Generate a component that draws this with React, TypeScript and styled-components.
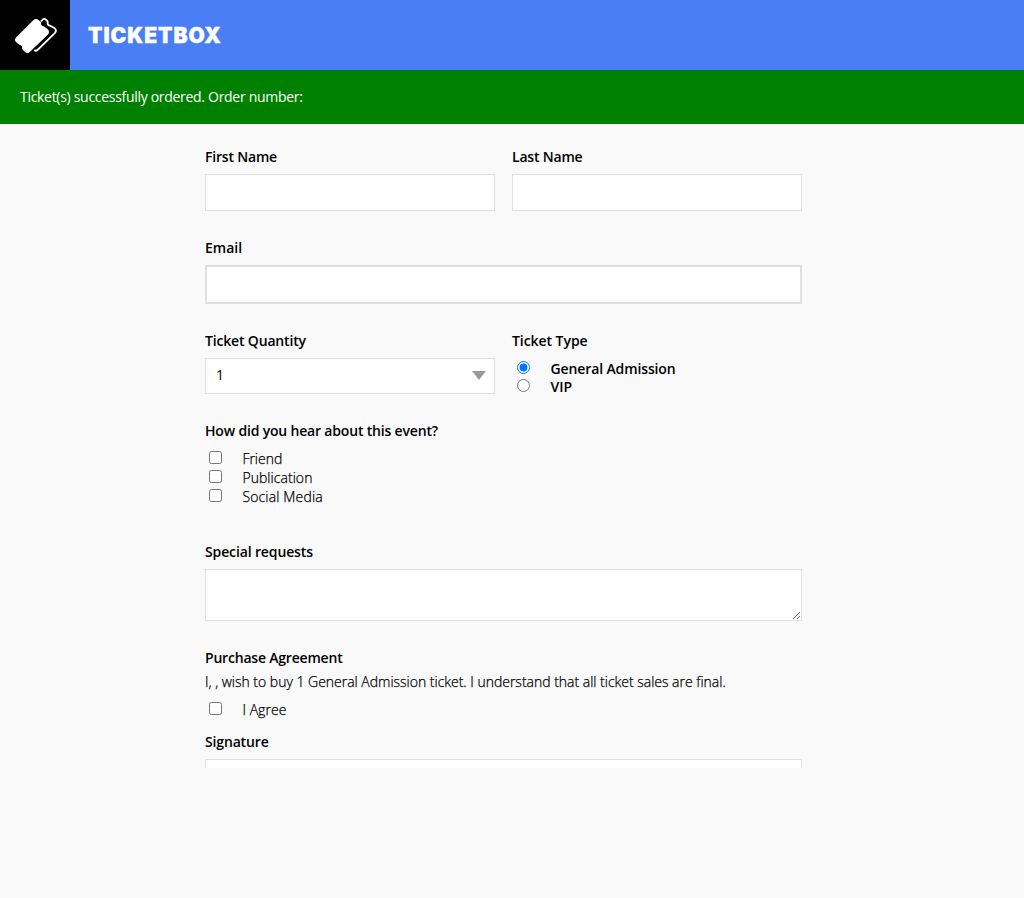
import React from 'react';
import styled, { createGlobalStyle } from 'styled-components';

const GlobalStyle = createGlobalStyle`
  *, *::before, *::after { box-sizing: border-box; }
  body {
    margin: 0;
    background: #f9f9f9;
    color: #000;
    font: 300 14px/19px 'Open Sans', 'Noto Sans', sans-serif;
  }
`;

const Header = styled.header`
  display: flex;
  align-items: center;
  height: 70px;
  background: #4a7ef4;
`;

const LogoTile = styled.div`
  width: 70px;
  height: 70px;
  background: #000;
`;

const Brand = styled.h1`
  margin: 2px 0 0 18px;
  color: #fff;
  font: 900 21px/30px Inter, sans-serif;
  letter-spacing: 1px;
  -webkit-text-stroke: 0.4px #fff;
`;

const Banner = styled.div`
  height: 54px;
  padding: 17px 20px;
  background: #008000;
  color: #fff;
  font-weight: 400;
  font-size: 14px;
  line-height: 20px;
`;

const Phrase = styled.span<{ $track?: number }>`
  letter-spacing: ${(p) => p.$track ?? 0}px;
  white-space: nowrap;
`;

const LightPhrase = styled(Phrase)`
  -webkit-text-stroke: 0.25px #000;
`;

const Form = styled.form`
  width: 597px;
  height: 644px;
  margin-left: 205px;
  padding-top: 23px;
  overflow: hidden;
`;

const Columns = styled.div`
  display: grid;
  grid-template-columns: 290px 290px;
  column-gap: 17px;
`;

const Field = styled.div<{ $gap?: number }>`
  display: flex;
  flex-direction: column;
  margin-bottom: ${(p) => p.$gap ?? 0}px;
`;

const Label = styled.label<{ $gap?: number }>`
  height: 20px;
  margin-bottom: ${(p) => p.$gap ?? 7}px;
  font-weight: 600;
  font-size: 14px;
  line-height: 20px;
`;

const Input = styled.input<{ $strong?: boolean }>`
  width: 100%;
  height: ${(p) => (p.$strong ? 39 : 37)}px;
  margin: 0;
  border: ${(p) => (p.$strong ? 2 : 1)}px solid #dfdfdf;
  border-radius: 0;
  background: #fff;
`;

const SelectBox = styled.div`
  display: flex;
  align-items: center;
  justify-content: space-between;
  height: 36px;
  padding: 0 8px 2px 10px;
  border: 1px solid #dfdfdf;
  background: #fff;
  font-weight: 400;
  font-size: 14px;
  line-height: 18px;
`;

const TextArea = styled.textarea`
  display: block;
  width: 100%;
  height: 52px;
  margin: 0;
  border: 1px solid #dfdfdf;
  border-radius: 0;
  background: #fff;
`;

const Option = styled.label<{ $radio?: boolean }>`
  display: flex;
  height: ${(p) => (p.$radio ? 18 : 19)}px;
  line-height: 18px;
  font-weight: ${(p) => (p.$radio ? 600 : 300)};

  input {
    width: 13px;
    height: 13px;
    margin: ${(p) => (p.$radio ? '1px 20.5px 0 5px' : '1px 20.4px 0 4px')};
  }
`;

const Statement = styled.p`
  height: 20px;
  margin: 0 0 9px;
  line-height: 20px;
`;

const TicketsIcon = () => (
  <svg width="70" height="70" viewBox="0 0 70 70" aria-hidden="true">
    <path
      d="M41 21.500 42.300 20Q44 18 46 19.700L47.800 21.800Q46.800 25 50.300 25.800L54.800 28.300Q57 30.500 55 32.800L37.500 50Q36 51.500 34.300 50"
      fill="none"
      stroke="#fff"
      strokeWidth="1.800"
      strokeLinejoin="round"
    />
    <path
      d="M33.500 20Q36 18 38.500 20L41.200 22.300Q40.200 25.800 43.600 26.300L48 29.500Q50 32 48 34.500L30 51.700Q27.500 54 25 52L22 48.700Q22.800 45.200 19.300 44.800L16 42Q14 39.800 16 37.500Z"
      fill="#fff"
    />
  </svg>
);

const Caret = () => (
  <svg width="14" height="9" viewBox="0 0 14 9" aria-hidden="true">
    <path d="M0 0H14L7 9Z" fill="#999" />
  </svg>
);

export default function App() {
  return (
    <>
      <GlobalStyle />
      <Header>
        <LogoTile><TicketsIcon /></LogoTile>
        <Brand>TICKETBOX</Brand>
      </Header>
      <Banner><Phrase $track={-0.3}>Ticket(s) successfully ordered. Order number:</Phrase></Banner>
      <Form>
        <Columns>
          <Field $gap={27}>
            <Label><Phrase $track={-0.2}>First Name</Phrase></Label>
            <Input />
          </Field>
          <Field $gap={27}>
            <Label><Phrase $track={-0.2}>Last Name</Phrase></Label>
            <Input />
          </Field>
        </Columns>
        <Field $gap={27}>
          <Label><Phrase>Email</Phrase></Label>
          <Input $strong type="email" />
        </Field>
        <Columns>
          <Field $gap={27}>
            <Label><Phrase $track={-0.17}>Ticket Quantity</Phrase></Label>
            <SelectBox>1<Caret /></SelectBox>
          </Field>
          <Field>
            <Label $gap={9}><Phrase $track={-0.06}>Ticket Type</Phrase></Label>
            <Option $radio><input type="radio" name="type" defaultChecked /><Phrase $track={-0.12}>General Admission</Phrase></Option>
            <Option $radio><input type="radio" name="type" /><Phrase>VIP</Phrase></Option>
          </Field>
        </Columns>
        <Field $gap={35}>
          <Label $gap={9}><Phrase $track={-0.18}>How did you hear about this event?</Phrase></Label>
          <Option><input type="checkbox" /><LightPhrase>Friend</LightPhrase></Option>
          <Option><input type="checkbox" /><LightPhrase $track={0.05}>Publication</LightPhrase></Option>
          <Option><input type="checkbox" /><LightPhrase $track={0.15}>Social Media</LightPhrase></Option>
        </Field>
        <Field $gap={27}>
          <Label><Phrase $track={-0.13}>Special requests</Phrase></Label>
          <TextArea />
        </Field>
        <Field $gap={12}>
          <Label $gap={4}><Phrase $track={-0.2}>Purchase Agreement</Phrase></Label>
          <Statement><LightPhrase $track={-0.015}>I, , wish to buy 1 General Admission ticket. I understand that all ticket sales are final.</LightPhrase></Statement>
          <Option><input type="checkbox" /><LightPhrase $track={0.05}>I Agree</LightPhrase></Option>
        </Field>
        <Field>
          <Label><Phrase $track={-0.15}>Signature</Phrase></Label>
          <Input />
        </Field>
      </Form>
    </>
  );
}
